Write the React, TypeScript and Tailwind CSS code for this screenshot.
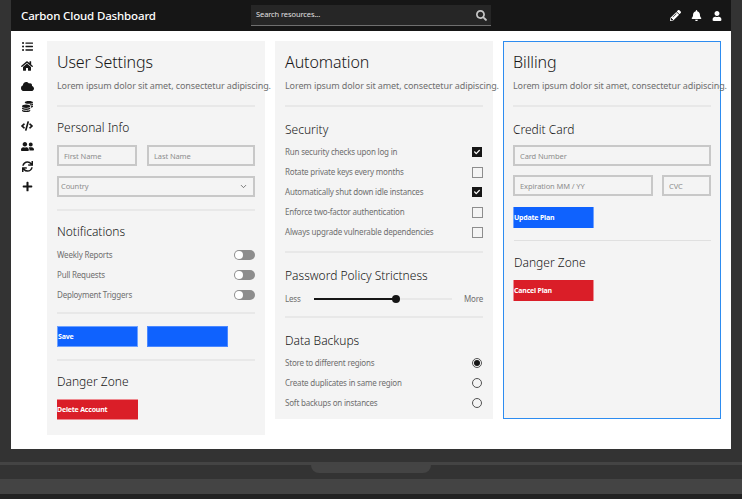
import { ChevronDown } from 'lucide-react';
import {
  FaBell,
  FaCheck,
  FaCloud,
  FaCode,
  FaCoins,
  FaHome,
  FaListUl,
  FaPencilAlt,
  FaPlus,
  FaSearch,
  FaSync,
  FaUser,
  FaUserFriends,
} from 'react-icons/fa';

const sideIcons = [
  { Icon: FaListUl, size: 11 },
  { Icon: FaHome, size: 12 },
  { Icon: FaCloud, size: 13 },
  { Icon: FaCoins, size: 11 },
  { Icon: FaCode, size: 12 },
  { Icon: FaUserFriends, size: 13 },
  { Icon: FaSync, size: 11 },
  { Icon: FaPlus, size: 11 },
];

const lorem = 'Lorem ipsum dolor sit amet, consectetur adipiscing.';

function CardTitle({ title }: { title: string }) {
  return (
    <>
      <h2 className="mt-[9px] h-[24px] text-[16px] leading-[24px] font-light tracking-[-0.1px] text-[#161616]">{title}</h2>
      <p className="mt-[5px] h-[14px] text-[9px] leading-[14px] tracking-[-0.1px] text-[#6f6f6f] whitespace-nowrap">{lorem}</p>
    </>
  );
}

function Divider({ className }: { className: string }) {
  return <div className={`h-[2px] bg-[#e8e8e8] ${className}`} />;
}

function Heading({ children, className }: { children: string; className: string }) {
  return <h3 className={`h-[16px] text-[12px] leading-[15px] font-light text-[#161616] ${className}`}>{children}</h3>;
}

function Field({ placeholder, className }: { placeholder: string; className: string }) {
  return (
    <input
      placeholder={placeholder}
      className={`h-[21px] min-w-0 border-2 border-[#c8c8c8] bg-[#f4f4f4] px-[5px] text-[7.5px] tracking-[-0.1px] outline-none placeholder:text-[#8d8d8d] ${className}`}
    />
  );
}

function Row({ label, children }: { label: string; children: React.ReactNode }) {
  return (
    <div className="flex h-[20px] items-center justify-between text-[8px] tracking-[-0.2px] text-[#6f6f6f]">
      <span className="whitespace-nowrap">{label}</span>
      {children}
    </div>
  );
}

function Toggle() {
  return (
    <span className="flex h-[10px] w-[21px] items-center rounded-full bg-[#8d8d8d] pl-[1px]">
      <span className="h-[8px] w-[8px] rounded-full bg-white" />
    </span>
  );
}

function Check({ on }: { on?: boolean }) {
  return on ? (
    <span className="mr-[1px] flex h-[10px] w-[10px] items-center justify-center bg-[#161616] text-white">
      <FaCheck size={6} />
    </span>
  ) : (
    <span className="h-[11px] w-[11px] border border-[#8d8d8d] bg-[#f4f4f4]" />
  );
}

function Radio({ on }: { on?: boolean }) {
  return (
    <span className="mr-[1px] flex h-[10px] w-[10px] items-center justify-center rounded-full border border-[#525252]">
      {on && <span className="h-[6px] w-[6px] rounded-full bg-[#161616]" />}
    </span>
  );
}

function Btn({ label, color, className }: { label?: string; color: string; className: string }) {
  return (
    <button className={`flex h-[21px] w-[81px] items-center pt-[1px] text-[7px] font-bold tracking-[-0.2px] text-white whitespace-nowrap ${color} ${className}`}>
      {label}
    </button>
  );
}

export default function App() {
  return (
    <div
      className="flex h-[499px] w-[742px] flex-col overflow-hidden bg-[#333333]"
      style={{ fontFamily: '"Noto Sans", "Open Sans", sans-serif' }}
    >
      <div className="mx-[11px] flex h-[449px] w-[720px] shrink-0 flex-col bg-white">
        <header className="flex h-[31px] shrink-0 items-center bg-[#161616] pl-[10px] pr-[9px] text-white">
          <span className="w-[230px] text-[11.5px] font-medium tracking-[-0.15px] whitespace-nowrap">Carbon Cloud Dashboard</span>
          <div className="flex h-[21px] w-[240px] items-center justify-between border-b border-[#6f6f6f] bg-[#262626] pl-[5px] pr-[4px]">
            <span className="text-[7.5px] tracking-[-0.1px] text-[#e0e0e0]">Search resources...</span>
            <FaSearch size={11} className="text-[#c6c6c6]" />
          </div>
          <div className="ml-auto flex items-center gap-[10px]">
            <FaPencilAlt size={11} />
            <FaBell size={11} />
            <FaUser size={10} />
          </div>
        </header>
        <div className="flex flex-1 items-start">
          <nav className="flex w-[36px] shrink-0 flex-col items-center pt-[5px] pr-[4px]">
            {sideIcons.map(({ Icon, size }, i) => (
              <div key={i} className="flex h-[20px] items-center justify-center text-[#161616]">
                <Icon size={size} />
              </div>
            ))}
          </nav>
          <div className="mt-[10px] flex items-start gap-[10px]">
            <section className="flex h-[394px] w-[218px] flex-col bg-[#f4f4f4] px-[10px]">
              <CardTitle title="User Settings" />
              <Divider className="mt-[12px]" />
              <Heading className="mt-[13px]">Personal Info</Heading>
              <div className="mt-[9px] flex gap-[10px]">
                <Field placeholder="First Name" className="w-[80px]" />
                <Field placeholder="Last Name" className="w-[108px]" />
              </div>
              <div className="mt-[10px] flex h-[21px] items-center justify-between border-2 border-[#c8c8c8] pl-[2px] pr-[5px] text-[7.5px] tracking-[-0.1px] text-[#8d8d8d]">
                Country
                <ChevronDown size={9} className="text-[#525252]" />
              </div>
              <Divider className="mt-[12px]" />
              <Heading className="mt-[13px]">Notifications</Heading>
              <div className="mt-[5px]">
                <Row label="Weekly Reports"><Toggle /></Row>
                <Row label="Pull Requests"><Toggle /></Row>
                <Row label="Deployment Triggers"><Toggle /></Row>
              </div>
              <Divider className="mt-[7px]" />
              <div className="mt-[12px] flex gap-[9px]">
                <Btn label="Save" color="bg-[#0f62fe]" className="border border-[#6ea1ff]" />
                <Btn color="bg-[#0f62fe]" className="border border-[#4b88ff]" />
              </div>
              <Divider className="mt-[12px]" />
              <Heading className="mt-[13px]">Danger Zone</Heading>
              <Btn label="Delete Account" color="bg-[#da1e28]" className="mt-[9px] w-[80px] border-y border-[#ee8a90]" />
            </section>

            <section className="flex h-[378px] w-[218px] flex-col bg-[#f4f4f4] px-[10px]">
              <CardTitle title="Automation" />
              <Divider className="mt-[12px]" />
              <Heading className="mt-[15px]">Security</Heading>
              <div className="mt-[4px]">
                <Row label="Run security checks upon log in"><Check on /></Row>
                <Row label="Rotate private keys every months"><Check /></Row>
                <Row label="Automatically shut down idle instances"><Check on /></Row>
                <Row label="Enforce two-factor authentication"><Check /></Row>
                <Row label="Always upgrade vulnerable dependencies"><Check /></Row>
              </div>
              <Divider className="mt-[9px]" />
              <Heading className="mt-[15px]">Password Policy Strictness</Heading>
              <div className="mt-[8px] flex h-[14px] items-center text-[8px] tracking-[-0.2px] text-[#6f6f6f]">
                <span className="w-[29px]">Less</span>
                <div className="relative flex h-[2px] w-[138px] bg-[#e8e8e8]">
                  <div className="h-[2px] w-[82px] bg-[#161616]" />
                  <div className="absolute left-[78px] top-[-3px] h-[8px] w-[8px] rounded-full bg-[#161616]" />
                </div>
                <span className="ml-auto">More</span>
              </div>
              <Divider className="mt-[10px]" />
              <Heading className="mt-[15px]">Data Backups</Heading>
              <div className="mt-[4px]">
                <Row label="Store to different regions"><Radio on /></Row>
                <Row label="Create duplicates in same region"><Radio /></Row>
                <Row label="Soft backups on instances"><Radio /></Row>
              </div>
            </section>

            <section className="flex h-[378px] w-[218px] flex-col border border-[#2d8cf0] bg-[#f4f4f4] pl-[9px] pr-[9px]">
              <div className="-mt-[1px]">
                <CardTitle title="Billing" />
              </div>
              <Divider className="mt-[12px]" />
              <Heading className="mt-[15px]">Credit Card</Heading>
              <Field placeholder="Card Number" className="mt-[7px] w-full" />
              <div className="mt-[9px] flex gap-[9px]">
                <Field placeholder="Expiration MM / YY" className="w-[140px]" />
                <Field placeholder="CVC" className="w-[49px]" />
              </div>
              <Btn label="Update Plan" color="bg-[#0f62fe]" className="mt-[11px] h-[20px] border-x border-[#6ea1ff]" />
              <div className="ml-[1px] mt-[12px] h-[1px] bg-[#e0e0e0]" />
              <Heading className="ml-[1px] mt-[14px]">Danger Zone</Heading>
              <Btn label="Cancel Plan" color="bg-[#da1e28]" className="mt-[9px] h-[20px] border-x border-[#ee8a90]" />
            </section>
          </div>
        </div>
      </div>

      <div className="mt-[13px] h-[3px] shrink-0 bg-[#444444]" />
      <div className="flex h-[14px] shrink-0 justify-center">
        <div className="h-[8px] w-[120px] rounded-b-[8px] bg-[#444444]" />
      </div>
      <div className="h-[15px] shrink-0 bg-[#444444]" />
      <div className="flex-1 bg-[#222222]" />
    </div>
  );
}
